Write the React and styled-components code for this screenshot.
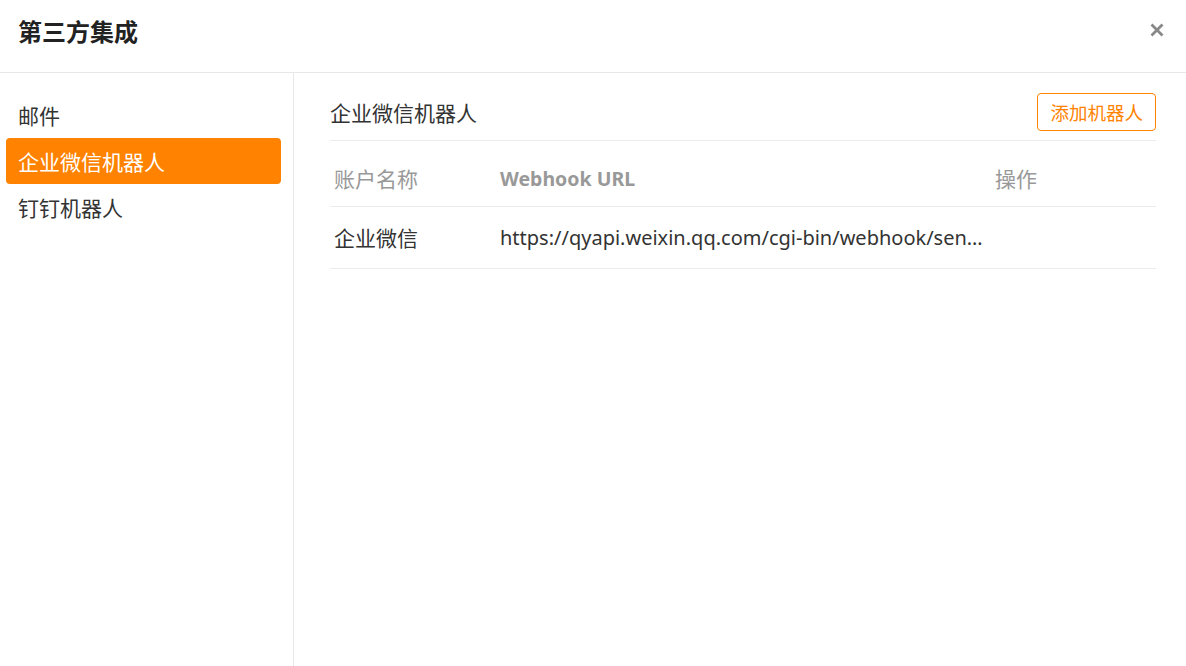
import React from "react";
import styled, { createGlobalStyle } from "styled-components";

const GlobalStyle = createGlobalStyle`
  html, body {
    margin: 0;
    padding: 0;
    background: #fff;
  }
  body {
    font-family: "Noto Sans", "Noto Sans CJK SC", sans-serif;
    color: #333;
  }
`;

const Dialog = styled.div`
  width: 1186px;
  height: 666px;
  display: flex;
  flex-direction: column;
  background: #fff;
  overflow: hidden;
`;

const Header = styled.div`
  height: 73px;
  flex-shrink: 0;
  display: flex;
  align-items: center;
  justify-content: space-between;
  padding: 0 21px 12px 18px;
  border-bottom: 1px solid #e8e8e8;
  box-sizing: border-box;
`;

const Title = styled.h2`
  margin: 0;
  font-size: 24px;
  font-weight: 700;
  color: #222;
`;

const CloseButton = styled.button`
  border: none;
  background: none;
  padding: 0;
  width: 16px;
  height: 16px;
  display: flex;
  align-items: center;
  justify-content: center;
  cursor: pointer;
`;

const Body = styled.div`
  flex: 1;
  display: flex;
  min-height: 0;
`;

const Sidebar = styled.nav`
  width: 294px;
  flex-shrink: 0;
  box-sizing: border-box;
  border-right: 1px solid #e8e8e8;
  padding: 19px 12px 0 6px;
  display: flex;
  flex-direction: column;
`;

const MenuItem = styled.div`
  height: 46px;
  flex-shrink: 0;
  display: flex;
  align-items: center;
  padding-left: 12px;
  border-radius: 4px;
  font-size: 21px;
  cursor: pointer;
  background: ${(p) => (p.$active ? "#ff8200" : "transparent")};
  color: ${(p) => (p.$active ? "#fff" : "#333")};
`;

const Content = styled.section`
  flex: 1;
  padding: 20px 30px 0 36px;
  display: flex;
  flex-direction: column;
`;

const SectionHead = styled.div`
  display: flex;
  align-items: center;
  justify-content: space-between;
  padding-bottom: 9px;
  border-bottom: 1px solid #ececec;
`;

const SectionTitle = styled.div`
  font-size: 21px;
  color: #333;
`;

const OutlineButton = styled.button`
  height: 38px;
  padding: 0 12px;
  border: 1px solid #ff8200;
  border-radius: 4px;
  background: #fff;
  color: #ff8200;
  font-family: inherit;
  font-size: 18.5px;
  cursor: pointer;
`;

const Table = styled.table`
  width: 100%;
  border-collapse: collapse;
  table-layout: fixed;
  margin-top: 10px;
`;

const Th = styled.th`
  box-sizing: border-box;
  height: 55px;
  text-align: left;
  padding: 0 4px;
  font-size: ${(p) => (p.$latin ? "19.5px" : "21px")};
  color: #999;
  font-weight: ${(p) => (p.$latin ? 700 : 400)};
  border-bottom: 1px solid #ececec;
  width: ${(p) => p.$w || "auto"};
`;

const Td = styled.td`
  box-sizing: border-box;
  height: 62px;
  padding: 0 4px;
  font-size: ${(p) => (p.$latin ? "20px" : "21px")};
  color: #333;
  border-bottom: 1px solid #ececec;
  white-space: nowrap;
  overflow: hidden;
  text-overflow: ellipsis;
`;

const menu = ["邮件", "企业微信机器人", "钉钉机器人"];

const rows = [
  {
    name: "企业微信",
    url: "https://qyapi.weixin.qq.com/cgi-bin/webhook/send?key=3a8f6c1e-92b4-4d7a-b0c2-7e5f1d9a0b34",
  },
];

export default function App() {
  return (
    <>
      <GlobalStyle />
      <Dialog>
        <Header>
          <Title>第三方集成</Title>
          <CloseButton aria-label="close">
            <svg width="14" height="14" viewBox="0 0 14 14">
              <path
                d="M1.5 1.5 L12.5 12.5 M12.5 1.5 L1.5 12.5"
                stroke="#888"
                strokeWidth="2.8"
              />
            </svg>
          </CloseButton>
        </Header>
        <Body>
          <Sidebar>
            {menu.map((m) => (
              <MenuItem key={m} $active={m === "企业微信机器人"}>
                {m}
              </MenuItem>
            ))}
          </Sidebar>
          <Content>
            <SectionHead>
              <SectionTitle>企业微信机器人</SectionTitle>
              <OutlineButton>添加机器人</OutlineButton>
            </SectionHead>
            <Table>
              <thead>
                <tr>
                  <Th $w="166px">账户名称</Th>
                  <Th $w="495px" $latin>
                    Webhook URL
                  </Th>
                  <Th>操作</Th>
                </tr>
              </thead>
              <tbody>
                {rows.map((r) => (
                  <tr key={r.name}>
                    <Td>{r.name}</Td>
                    <Td $latin>{r.url}</Td>
                    <Td />
                  </tr>
                ))}
              </tbody>
            </Table>
          </Content>
        </Body>
      </Dialog>
    </>
  );
}
